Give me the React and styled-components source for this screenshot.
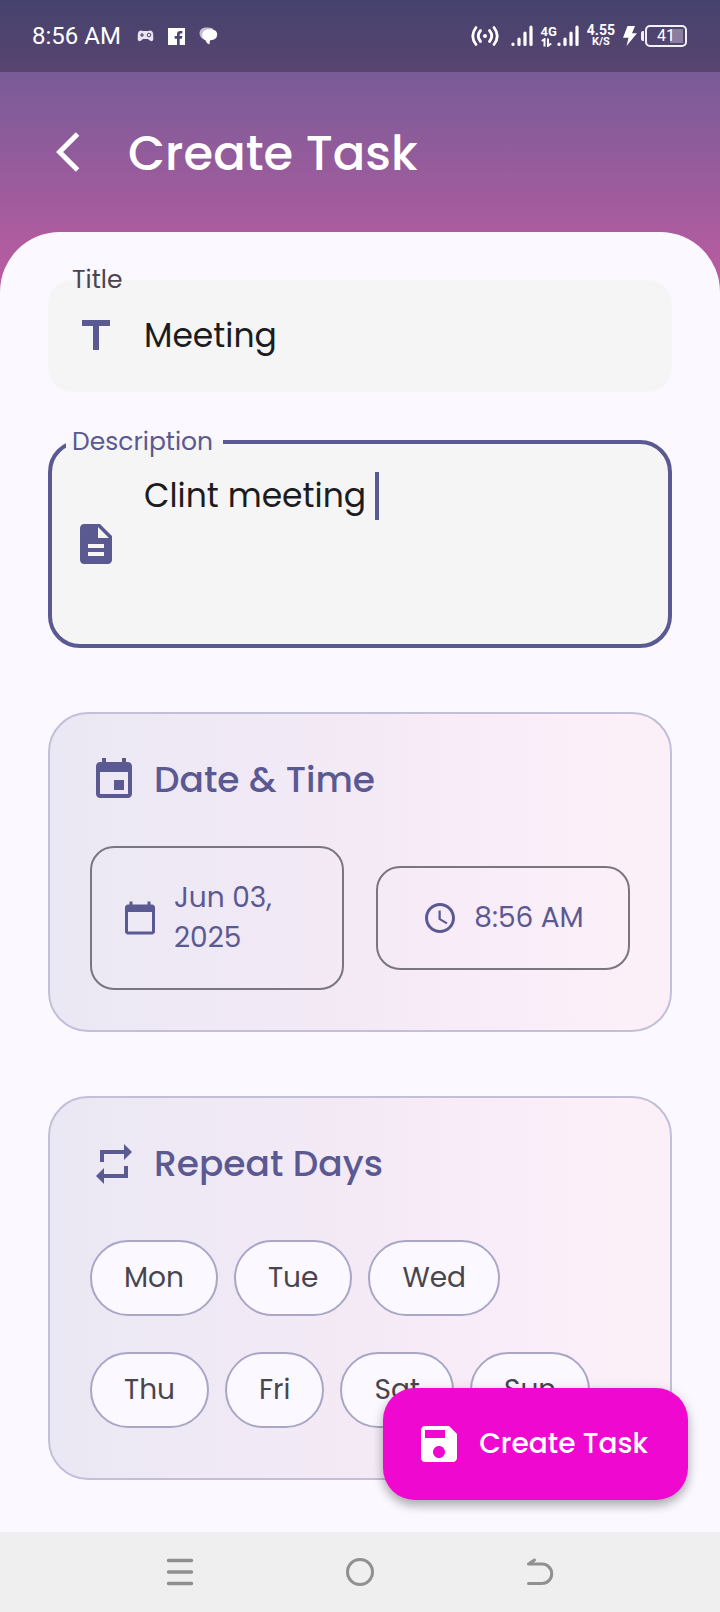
import React, { useState } from "react";
import styled, { createGlobalStyle } from "styled-components";

const primary = "#5b5992";
const surface = "#fbf9ff";

const GlobalStyle = createGlobalStyle`
  *, *::before, *::after { box-sizing: border-box; }
  body { margin: 0; background: ${surface}; }
  button, input, textarea { font: inherit; color: inherit; }
`;

const Screen = styled.div`
  position: relative;
  display: flex;
  flex-direction: column;
  min-height: 100vh;
  font-family: Poppins, Inter, sans-serif;
  font-weight: 400;
  background: linear-gradient(
    #5c5a92 0,
    #785b97 72px,
    #ab5c9f 232px,
    #bc5ba1 292px,
    ${surface} 292px
  );
`;

const StatusBar = styled.div`
  display: flex;
  align-items: center;
  justify-content: space-between;
  height: 72px;
  padding: 0 33px 0 32px;
  background: rgba(0, 0, 0, 0.25);
  color: #fff;
  font-family: Roboto, sans-serif;
`;

const StatusGroup = styled.div`
  display: flex;
  align-items: center;
  gap: ${(p) => p.$gap}px;
`;

const Clock = styled.span`
  margin-right: 2px;
  font-size: 24px;
  line-height: 28px;
`;

const Stack = styled.span`
  display: flex;
  flex-direction: column;
  align-items: ${(p) => p.$align || "center"};
  font-weight: 700;
  font-size: ${(p) => p.$size}px;
  line-height: 12px;
`;

const Unit = styled.span`
  font-size: 11px;
  line-height: 12px;
`;

const NetworkGroup = styled.span`
  display: flex;
  align-items: center;
`;

const Battery = styled.span`
  display: flex;
  align-items: center;
  justify-content: center;
  width: 42px;
  height: 22px;
  border: 2px solid #f4f0f8;
  border-radius: 5px;
  background: linear-gradient(#8b7d9e, #8b7d9e) 23px 2px / 13px 14px no-repeat;
  font-size: 16px;
  line-height: 18px;
`;

const BatteryNub = styled.span`
  width: 3px;
  height: 10px;
  margin-right: 1px;
  border-radius: 2px 0 0 2px;
  background: #f4f0f8;
`;

const BatteryGroup = styled.span`
  display: flex;
  align-items: center;
`;

const Header = styled.header`
  display: flex;
  align-items: center;
  gap: 24px;
  height: 160px;
  padding: 0 56px;
  color: #fff;
`;

const IconButton = styled.button`
  display: flex;
  padding: 0;
  border: 0;
  background: none;
  cursor: pointer;
`;

const PageTitle = styled.h1`
  margin: 0;
  padding-top: 4px;
  font-size: 48px;
  line-height: 60px;
  font-weight: 500;
`;

const Sheet = styled.main`
  flex: 1;
  display: flex;
  flex-direction: column;
  padding: 30px 48px 52px;
  border-radius: 60px 60px 0 0;
  background: ${surface};
`;

const Field = styled.fieldset`
  min-width: 0;
  margin: 0 0 ${(p) => p.$after}px;
  padding: 0 20px ${(p) => (p.$active ? 16 : 18)}px;
  border: ${(p) => (p.$active ? `4px solid ${primary}` : "0")};
  border-radius: ${(p) => (p.$active ? 32 : 24)}px;
  background: #f5f5f5;
`;

const Legend = styled.legend`
  margin-left: ${(p) => (p.$active ? -6 : -2)}px;
  padding: 0 10px 0 6px;
  color: ${(p) => (p.$active ? primary : "#49454f")};
  font-size: 25px;
  line-height: 36px;
`;

const FieldRow = styled.div`
  display: flex;
  align-items: center;
  gap: 24px;
  padding-left: ${(p) => (p.$active ? 0 : 4)}px;
  min-height: ${(p) => p.$height}px;
  color: ${primary};
`;

const TextInput = styled.input`
  flex: 1;
  min-width: 0;
  height: 48px;
  padding: 0;
  border: 0;
  outline: 0;
  background: none;
  color: #1c1b1f;
  font-size: 33px;
  line-height: 48px;
`;

const TextAreaLine = styled.div`
  display: flex;
  flex: 1;
  align-self: flex-start;
  padding-top: 12px;
`;

const TextArea = styled.textarea`
  field-sizing: content;
  max-width: 100%;
  min-height: 144px;
  padding: 0;
  border: 0;
  outline: 0;
  resize: none;
  background: none;
  color: #1c1b1f;
  caret-color: transparent;
  font-size: 33px;
  line-height: 48px;
`;

const Caret = styled.span`
  width: 4px;
  height: 48px;
  background: ${primary};
`;

const Card = styled.section`
  display: flex;
  flex-direction: column;
  gap: 40px;
  padding: 40px;
  border: 2px solid #c3bfd8;
  border-radius: 40px;
  background: linear-gradient(90deg, #eae8f4, #f4eaf6 50%, #f9edf9 75%, #fcf0f8);
  background-origin: border-box;
  & + & { margin-top: 64px; }
`;

const CardHeading = styled.div`
  display: flex;
  align-items: center;
  gap: 16px;
  height: 52px;
  color: ${primary};
`;

const CardTitle = styled.h2`
  margin: 0;
  font-size: 36px;
  line-height: 52px;
  font-weight: 500;
`;

const PickerRow = styled.div`
  display: flex;
  align-items: center;
  gap: 32px;
`;

const PickerButton = styled.button`
  display: flex;
  flex: 1 1 0;
  align-items: center;
  justify-content: center;
  gap: 16px;
  padding: 30px;
  border: 2px solid #797680;
  border-radius: 24px;
  background: none;
  color: ${primary};
  font-size: 28px;
  line-height: 40px;
  text-align: left;
  cursor: pointer;
  svg { flex: none; }
`;

const ChipList = styled.div`
  display: flex;
  flex-wrap: wrap;
  gap: 36px 16px;
  padding: 10px 0;
`;

const Chip = styled.button`
  height: 76px;
  padding: 0 32px;
  border: 2px solid #a9a6c6;
  border-radius: 38px;
  background: ${(p) => (p.$on ? "#dedcf2" : surface)};
  color: #49454f;
  font-size: 28px;
  line-height: 40px;
  cursor: pointer;
`;

const Fab = styled.button`
  position: absolute;
  right: 32px;
  bottom: 112px;
  display: flex;
  align-items: center;
  gap: 16px;
  height: 112px;
  padding: 0 40px 0 32px;
  border: 0;
  border-radius: 32px;
  background: #ee08d0;
  color: #fff;
  font-size: 28px;
  line-height: 40px;
  font-weight: 500;
  box-shadow: 0 6px 10px rgba(0, 0, 0, 0.24), 0 2px 14px rgba(0, 0, 0, 0.12);
  cursor: pointer;
`;

const NavBar = styled.nav`
  display: flex;
  height: 80px;
  padding: 0 12.5%;
  background: #efefef;
  color: #909090;
`;

const NavButton = styled(IconButton)`
  flex: 1;
  align-items: center;
  justify-content: center;
`;

const Icon = ({ d, size = 48 }) => (
  <svg width={size} height={size} viewBox="0 0 24 24" fill="currentColor" aria-hidden="true">
    <path d={d} />
  </svg>
);

const paths = {
  back: "M11.67 3.87 9.9 2.1 0 12l9.9 9.9 1.77-1.77L3.54 12z",
  title: "M5 4v3h5.5v12h3V7H19V4z",
  doc: "M14 2H6c-1.100 0-1.990.9-1.990 2L4 20c0 1.100.89 2 1.990 2H18c1.100 0 2-.9 2-2V8l-6-6zm2 16H8v-2h8v2zm0-4H8v-2h8v2zm-3-5V3.500L18.500 9H13z",
  event: "M17 12h-5v5h5v-5zM16 1v2H8V1H6v2H5c-1.110 0-1.990.9-1.990 2L3 19c0 1.100.89 2 2 2h14c1.100 0 2-.9 2-2V5c0-1.100-.9-2-2-2h-1V1h-2zm3 18H5V8h14v11z",
  calendar: "M20 3h-1V1h-2v2H7V1H5v2H4c-1.100 0-2 .9-2 2v16c0 1.100.9 2 2 2h16c1.100 0 2-.9 2-2V5c0-1.100-.9-2-2-2zm0 18H4V8h16v13z",
  clock: "M11.990 2C6.470 2 2 6.480 2 12s4.470 10 9.990 10C17.520 22 22 17.520 22 12S17.520 2 11.990 2zM12 20c-4.420 0-8-3.580-8-8s3.580-8 8-8 8 3.580 8 8-3.580 8-8 8zm.5-13H11v6l5.250 3.150.75-1.230-4.500-2.670z",
  repeat: "M7 7h10v3l4-4-4-4v3H5v6h2V7zm10 10H7v-3l-4 4 4 4v-3h12v-6h-2v4z",
  save: "M17 3H5c-1.110 0-2 .9-2 2v14c0 1.100.89 2 2 2h14c1.100 0 2-.9 2-2V7l-4-4zm-5 16c-1.660 0-3-1.340-3-3s1.340-3 3-3 3 1.340 3 3-1.340 3-3 3zm3-10H5V5h10v4z",
};

const Signal = () => (
  <svg width="22" height="22" viewBox="0 0 22 22" stroke="#fff" strokeWidth="3.200" strokeLinecap="round" aria-hidden="true">
    <path d="M2 19v.4M8 14v5.400M14 8v11.400M20 2.200v17.200" />
  </svg>
);

const GamepadIcon = () => (
  <svg width="17" height="14" viewBox="0 0 17 14" aria-hidden="true">
    <path d="M3.500 1.500Q8.500 2.500 13.500 1.500Q16 2 16.200 5.500L16.300 10.500Q15.500 13.500 12.800 11.500L11 10H6L4.200 11.500Q1.500 13.500.7 10.500L.8 5.500Q1 2 3.500 1.500z" fill="#e9e4ee" />
    <path d="M5 4v4M3 6h4" stroke="#51446e" strokeWidth="1.200" />
    <circle cx="12" cy="6" r="1.800" fill="none" stroke="#51446e" />
  </svg>
);

const FacebookIcon = () => (
  <svg width="17" height="17" viewBox="0 0 17 17" aria-hidden="true">
    <path d="M0 0h17v17h-5.300v-6.300h2.200l.4-2.700h-2.600V6.500q0-1.100 1.300-1.100h1.400V3h-2.200Q9 3 9 6v2H6.700v2.700H9V17H0z" fill="#fff" />
  </svg>
);

const ChatIcon = () => (
  <svg width="19" height="18" viewBox="0 0 19 18" aria-hidden="true">
    <path d="M6.500.5Q1 .8.5 6q.2 4 3.500 6l3 1L14 1.500Q10 0 6.500.5z" fill="#c5bed2" />
    <path d="M8.500 2.200h4.500q5.200.8 5.200 5.300-.2 4.800-5.400 5.500l-2 .5-.3 4Q7 16 6.200 13 3 11.500 3.200 8 3.700 3 8.500 2.200z" fill="#fff" />
  </svg>
);

const HotspotIcon = () => (
  <svg width="28" height="22" viewBox="0 0 28 22" fill="none" stroke="#fff" strokeWidth="2.800" strokeLinecap="round" aria-hidden="true">
    <path d="M5 2.500Q-1.500 11 5 19.500M9.500 5.500Q5 11 9.500 16.500M23 2.500Q29.500 11 23 19.500M18.500 5.500Q23 11 18.500 16.500" />
    <circle cx="14" cy="11" r="2" fill="#fff" stroke="none" />
  </svg>
);

const DataArrows = () => (
  <svg width="11" height="9" viewBox="0 0 11 9" fill="none" stroke="#fff" strokeWidth="2" aria-hidden="true">
    <path d="M.8 3 3.500 1.200V8.500M10.200 5.500 7 7.800V.5" />
  </svg>
);

const BoltIcon = () => (
  <svg width="14" height="20" viewBox="0 0 14 20" aria-hidden="true">
    <path d="M4.500 0H12L9 7.200h5L3.500 20l2-8.200H0z" fill="#fff" />
  </svg>
);

const days = ["Mon", "Tue", "Wed", "Thu", "Fri", "Sat", "Sun"];

export default function App() {
  const [title, setTitle] = useState("Meeting");
  const [description, setDescription] = useState("Clint meeting ");
  const [repeat, setRepeat] = useState([]);
  const toggle = (day) =>
    setRepeat((r) => (r.includes(day) ? r.filter((d) => d !== day) : [...r, day]));

  return (
    <Screen>
      <GlobalStyle />
      <StatusBar>
        <StatusGroup $gap={14}>
          <Clock>8:56 AM</Clock>
          <GamepadIcon />
          <FacebookIcon />
          <ChatIcon />
        </StatusGroup>
        <StatusGroup $gap={8}>
          <StatusGroup $gap={12}>
            <HotspotIcon />
            <Signal />
          </StatusGroup>
          <NetworkGroup>
            <Stack $align="flex-start" $size={13}>
              4G
              <DataArrows />
            </Stack>
            <Signal />
          </NetworkGroup>
          <Stack $size={14}>
            4.55
            <Unit>K/S</Unit>
          </Stack>
          <StatusGroup $gap={4}>
            <BoltIcon />
            <BatteryGroup>
              <BatteryNub />
              <Battery>41</Battery>
            </BatteryGroup>
          </StatusGroup>
        </StatusGroup>
      </StatusBar>

      <Header>
        <IconButton type="button" aria-label="Back">
          <Icon d={paths.back} />
        </IconButton>
        <PageTitle>Create Task</PageTitle>
      </Header>

      <Sheet>
        <Field $after={32}>
          <Legend>
            <label htmlFor="task-title">Title</label>
          </Legend>
          <FieldRow $height={76}>
            <Icon d={paths.title} />
            <TextInput id="task-title" value={title} onChange={(e) => setTitle(e.target.value)} />
          </FieldRow>
        </Field>

        <Field $active $after={64}>
          <Legend $active>
            <label htmlFor="task-description">Description</label>
          </Legend>
          <FieldRow $active $height={168}>
            <Icon d={paths.doc} />
            <TextAreaLine>
              <TextArea
                id="task-description"
                value={description}
                onChange={(e) => setDescription(e.target.value)}
              />
              <Caret />
            </TextAreaLine>
          </FieldRow>
        </Field>

        <Card>
          <CardHeading>
            <Icon d={paths.event} />
            <CardTitle>Date &amp; Time</CardTitle>
          </CardHeading>
          <PickerRow>
            <PickerButton type="button">
              <Icon d={paths.calendar} size={36} />
              <span>Jun 03, 2025</span>
            </PickerButton>
            <PickerButton type="button">
              <Icon d={paths.clock} size={36} />
              <span>8:56 AM</span>
            </PickerButton>
          </PickerRow>
        </Card>

        <Card>
          <CardHeading>
            <Icon d={paths.repeat} />
            <CardTitle>Repeat Days</CardTitle>
          </CardHeading>
          <ChipList>
            {days.map((day) => (
              <Chip
                key={day}
                type="button"
                $on={repeat.includes(day)}
                aria-pressed={repeat.includes(day)}
                onClick={() => toggle(day)}
              >
                {day}
              </Chip>
            ))}
          </ChipList>
        </Card>
      </Sheet>

      <Fab type="button">
        <Icon d={paths.save} />
        Create Task
      </Fab>

      <NavBar>
        <NavButton type="button" aria-label="Recent apps">
          <svg width="28" height="28" viewBox="0 0 28 28" stroke="currentColor" strokeWidth="3.500" strokeLinecap="round">
            <path d="M2.500 2.500h23M2.500 14h23M2.500 25.500h23" />
          </svg>
        </NavButton>
        <NavButton type="button" aria-label="Home">
          <svg width="28" height="28" viewBox="0 0 28 28" fill="none" stroke="currentColor" strokeWidth="3">
            <circle cx="14" cy="14" r="12.500" />
          </svg>
        </NavButton>
        <NavButton type="button" aria-label="Go back">
          <svg width="28" height="28" viewBox="0 0 28 28" fill="none" stroke="currentColor" strokeWidth="3" strokeLinecap="round" strokeLinejoin="round">
            <path d="M8.500 2 2.500 6H16a9.700 9.700 0 0 1 0 19.500H2.500" />
          </svg>
        </NavButton>
      </NavBar>
    </Screen>
  );
}
